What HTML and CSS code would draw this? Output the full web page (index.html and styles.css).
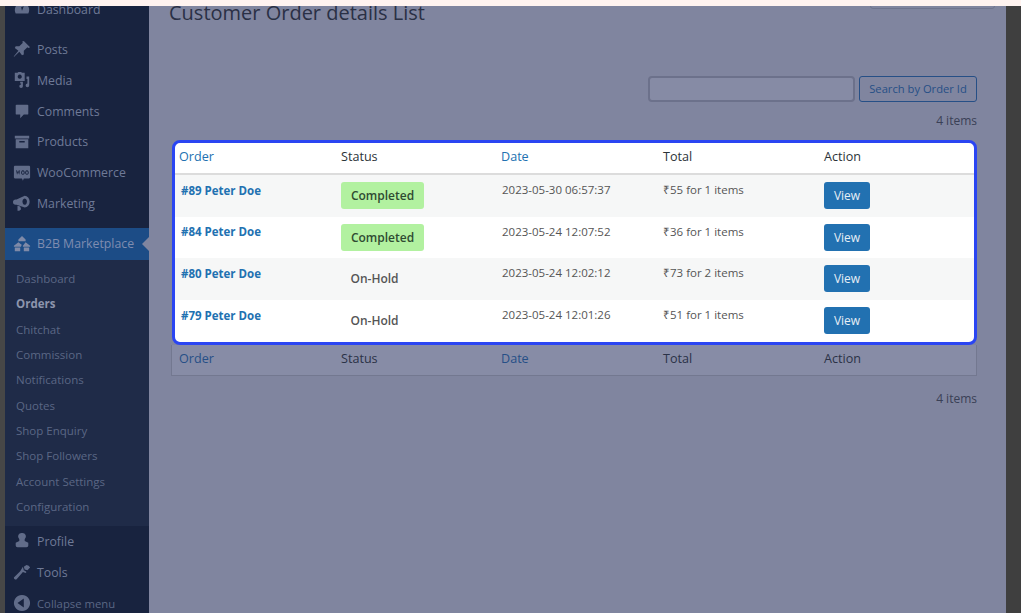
FILE: index.html
```html
<!DOCTYPE html>
<html lang="en">
    <head>
        <meta charset="UTF-8">
        <meta name="viewport" content="width=device-width, initial-scale=1.0">
        <title>Customer Order details List</title>
        <link rel="stylesheet" href="styles.css">
    </head>
    <body>
        <div class="top-strip"></div>
        <div class="screen">
            <div class="edge-left"></div>
            <nav class="sidebar">
                <ul class="menu menu-top">
                    <li><svg class="icon" viewBox="0 0 20 20"><path d="M3 15a8 8 0 1 1 14 0zM9 8l1 4 2-5z" fill-rule="evenodd"/></svg>Dashboard</li>
                    <li class="gap"><svg class="icon" viewBox="0 0 20 20"><path d="M12 1l7 7-2 1-1-1-4 4 0 4-2 1-3-4-6 6 0-1 5-6-4-3 1-2 4 0 4-4-1-1z"/></svg>Posts</li>
                    <li><svg class="icon" viewBox="0 0 20 20"><path d="M2 2h3l1-1h3l1 1h3v9H2zM7.500 4a2.300 2.300 0 1 0 .01 0zM15 6h3v10a2 2 0 1 1-2-2V9h-1zM8 12h3v5a2 2 0 1 1-2-2v-1H8z" fill-rule="evenodd"/></svg>Media</li>
                    <li><svg class="icon" viewBox="0 0 20 20"><path d="M4 3h12a1 1 0 0 1 1 1v9a1 1 0 0 1-1 1h-4l-4 4v-4H4a1 1 0 0 1-1-1V4a1 1 0 0 1 1-1z"/></svg>Comments</li>
                    <li><svg class="icon" viewBox="0 0 20 20"><path d="M2 3h16v3H2zM3 7h14v10H3zM7 9v1.500h6V9z" fill-rule="evenodd"/></svg>Products</li>
                    <li><svg class="icon" viewBox="0 0 20 20"><path d="M2 2h16a1.500 1.500 0 0 1 1 1v12a1.500 1.500 0 0 1-1 1h-6l-1 2.500-1-2.500H2a1.500 1.500 0 0 1-1-1V3a1.500 1.500 0 0 1 1-1zM3.500 7l1 5 1.200-3 1.200 3 1-5-.8 0-.4 2.500-1-2.500-1 2.500-.4-2.500zM11 7a2 2.500 0 1 0 .01 0zM11 8a1 1.500 0 1 1-.01 0zM15.500 7a2 2.500 0 1 0 .01 0zM15.500 8a1 1.500 0 1 1-.01 0z" fill-rule="evenodd"/></svg>WooCommerce</li>
                    <li><svg class="icon" viewBox="0 0 20 20"><path d="M13 2a5.500 6.500 0 1 1 0 13l-9-3-1 0a3 3 0 0 1 0-6l1 0zM13 5a2.500 3.500 0 1 0 .01 0zM5 13l3 1 1 3-2 1.500h-2z" fill-rule="evenodd"/></svg>Marketing</li>
                </ul>
                <div class="menu-current"><svg class="icon" viewBox="0 0 20 20"><path d="M10 1l4 4v2h-8V5zM6 8l4 3-1 1v1H1v-1zM14 8l5 4v1h-8v-1zM2 14h6v4H2zM12 14h6v4h-6z"/></svg>B2B Marketplace</div>
                <ul class="submenu">
                    <li>Dashboard</li>
                    <li class="current">Orders</li>
                    <li>Chitchat</li>
                    <li>Commission</li>
                    <li>Notifications</li>
                    <li>Quotes</li>
                    <li>Shop Enquiry</li>
                    <li>Shop Followers</li>
                    <li>Account Settings</li>
                    <li>Configuration</li>
                </ul>
                <ul class="menu menu-bottom">
                    <li><svg class="icon" viewBox="0 0 20 20"><path d="M10 1a4 4 0 0 1 3 7v2l4 2v3a2 2 0 0 1-2 2H5a2 2 0 0 1-2-2v-3l4-2V8a4 4 0 0 1 3-7z"/></svg>Profile</li>
                    <li><svg class="icon" viewBox="0 0 20 20"><path d="M15 1a5 5 0 0 1 4 3l-3 3-3-1-1-3 3-2zM11 3l1 4 2 1 1 1-1 1-3-1-7 8a2 2 0 0 1-3-2l7-7z"/></svg>Tools</li>
                    <li class="collapse"><svg class="icon" viewBox="0 0 20 20"><path d="M10 1a9 9 0 1 1-.01 0zM12 5l-7 5 7 5z" fill-rule="evenodd"/></svg>Collapse menu</li>
                </ul>
            </nav>
            <main class="content">
                <header class="page-head">
                    <h1>Customer Order details List</h1>
                    <div class="ghost-btn"></div>
                </header>
                <form class="search-row">
                    <input type="text" class="search-input" aria-label="Search by Order Id">
                    <button type="button" class="search-btn">Search by Order Id</button>
                </form>
                <p class="count">4 items</p>
                <div class="orders">
                    <div class="highlight">
                        <div class="row row-head">
                            <div class="link">Order</div>
                            <div>Status</div>
                            <div class="link">Date</div>
                            <div>Total</div>
                            <div>Action</div>
                        </div>
                        <div class="row row-order row-alt">
                            <div class="order-name">#89 Peter Doe</div>
                            <div><span class="badge done">Completed</span></div>
                            <div class="cell-date">2023-05-30 06:57:37</div>
                            <div>₹55 for 1 items</div>
                            <div><button type="button" class="view-btn">View</button></div>
                        </div>
                        <div class="row row-order">
                            <div class="order-name">#84 Peter Doe</div>
                            <div><span class="badge done">Completed</span></div>
                            <div class="cell-date">2023-05-24 12:07:52</div>
                            <div>₹36 for 1 items</div>
                            <div><button type="button" class="view-btn">View</button></div>
                        </div>
                        <div class="row row-order row-alt">
                            <div class="order-name">#80 Peter Doe</div>
                            <div><span class="badge hold">On-Hold</span></div>
                            <div class="cell-date">2023-05-24 12:02:12</div>
                            <div>₹73 for 2 items</div>
                            <div><button type="button" class="view-btn">View</button></div>
                        </div>
                        <div class="row row-order">
                            <div class="order-name">#79 Peter Doe</div>
                            <div><span class="badge hold">On-Hold</span></div>
                            <div class="cell-date">2023-05-24 12:01:26</div>
                            <div>₹51 for 1 items</div>
                            <div><button type="button" class="view-btn">View</button></div>
                        </div>
                    </div>
                    <div class="row row-foot">
                        <div class="link">Order</div>
                        <div>Status</div>
                        <div class="link">Date</div>
                        <div>Total</div>
                        <div>Action</div>
                    </div>
                </div>
                <p class="count count-bottom">4 items</p>
            </main>
            <div class="edge-right"></div>
        </div>
    </body>
</html>
```

FILE: styles.css
```css
/* Reset default styles */
* {
  margin: 0;
  padding: 0;
  box-sizing: border-box;
}

html,
body {
  height: 100%;
  overflow: hidden;
}

body {
  font-family: 'Open Sans', sans-serif;
  font-size: 12px;
  background-color: #80859f;
  display: flex;
  flex-direction: column;
}

.top-strip {
  height: 6px;
  flex: none;
  background-color: #fff3f0;
  position: relative;
  z-index: 2;
}

.screen {
  flex: 1;
  display: flex;
  min-height: 0;
}

.edge-left {
  width: 5px;
  background-color: #474747;
}

.edge-right {
  width: 15px;
  background-color: #3f3f3f;
}

/* Sidebar */
.sidebar {
  width: 144px;
  flex: none;
  margin-top: -12px;
  background-color: #18233f;
  color: #6f7a97;
  font-size: 12.300px;
}

.menu {
  list-style: none;
}

.menu li {
  height: 30.800px;
  display: flex;
  align-items: center;
  padding-left: 8px;
}

.menu li.gap {
  margin-top: 9.300px;
}

.icon {
  width: 18px;
  height: 18px;
  flex: none;
  margin-right: 6px;
  fill: #616c89;
}

.menu-current {
  height: 32px;
  margin-top: 8.700px;
  display: flex;
  align-items: center;
  padding-left: 8px;
  background-color: #1c4c86;
  color: #7f8db0;
  position: relative;
}

.menu-current .icon {
  fill: #7f8aa8;
}

.menu-current::after {
  content: '';
  position: absolute;
  right: 0;
  top: 9px;
  border: 7px solid transparent;
  border-right-color: #80859f;
  border-left: 0;
}

.submenu {
  list-style: none;
  background-color: #1f2b48;
  padding: 6.400px 0 6.600px 11px;
  color: #5b6785;
  font-size: 11.500px;
}

.submenu li {
  height: 25.350px;
  line-height: 25px;
}

.submenu .current {
  font-weight: 700;
  color: #8d95ad;
}

.menu-bottom li {
  height: 31px;
}

.menu-bottom li:nth-child(2) {
  height: 32px;
}

.menu-bottom .collapse {
  height: 29px;
  font-size: 11.300px;
  color: #5b6785;
}

/* Main column */
.content {
  flex: 1;
  min-width: 0;
  padding: 0 29px 0 20px;
  color: #2b3247;
}

.page-head {
  display: flex;
  justify-content: space-between;
  height: 76px;
  margin-top: -6px;
}

.page-head h1 {
  font-size: 20px;
  font-weight: 400;
  line-height: 26px;
  color: #2a3045;
}

.ghost-btn {
  width: 125px;
  height: 9px;
  margin-right: -18px;
  border: 1px solid #6f748e;
  border-radius: 3px;
}

.search-row {
  display: flex;
  justify-content: flex-end;
  gap: 4px;
  height: 26px;
}

.search-input {
  width: 207px;
  border: 2px solid #6c718b;
  border-radius: 4px;
  background-color: #868ba5;
}

.search-btn {
  width: 118px;
  padding-bottom: 1px;
  border: 1px solid #264f86;
  border-radius: 3px;
  background: none;
  color: #264f86;
  font-family: inherit;
  font-size: 11.200px;
}

.count {
  text-align: right;
  line-height: 18px;
  margin-top: 10px;
  color: #3a4056;
}

/* Orders table */
.orders {
  margin-top: 10px;
}

.highlight {
  margin-left: 3px;
  border: 3px solid #2a45f2;
  border-radius: 8px;
  background-color: #fff;
  overflow: hidden;
  color: #555;
}

.row {
  display: grid;
  grid-template-columns: 162px 160px 162px 161px 1fr;
}

.row > div {
  padding-left: 4px;
}

.row-head {
  height: 32px;
  align-items: center;
  padding-bottom: 3px;
  border-bottom: 2px solid #dcdcdc;
  color: #2c3338;
  font-size: 12.600px;
}

.link {
  color: #2271b1;
}

.row-order {
  height: 41.700px;
  padding-top: 7px;
  line-height: 16px;
  font-size: 11.500px;
}

.row-alt {
  background-color: #f6f7f7;
}

.row > .order-name {
  padding-left: 6px;
  padding-top: 0.500px;
  font-weight: 700;
  color: #2271b1;
}

.row > .cell-date {
  padding-left: 5px;
}

.badge {
  display: inline-block;
  height: 27px;
  line-height: 27px;
  width: 83px;
  text-align: center;
  border-radius: 3px;
  font-size: 12px;
  font-weight: 600;
}

.badge.done {
  background-color: #b2f1a0;
  color: #2f4b32;
}

.badge.hold {
  width: 67px;
  background-color: #fff;
  color: #555;
}

.row-alt .badge.hold {
  background-color: #f6f7f7;
}

.view-btn {
  width: 46px;
  height: 27px;
  border: 0;
  border-radius: 3px;
  background-color: #2271b1;
  color: #e6eef5;
  font-family: inherit;
  font-size: 12px;
}

.row-foot {
  height: 31px;
  margin-left: 2px;
  padding-left: 3px;
  padding-bottom: 2px;
  align-items: center;
  background-color: #878ca6;
  border: 1px solid #737890;
  border-top: 0;
  color: #2b3247;
  font-size: 12.600px;
}

.row-foot .link {
  color: #264f86;
}

.count-bottom {
  margin-top: 14px;
}
```
